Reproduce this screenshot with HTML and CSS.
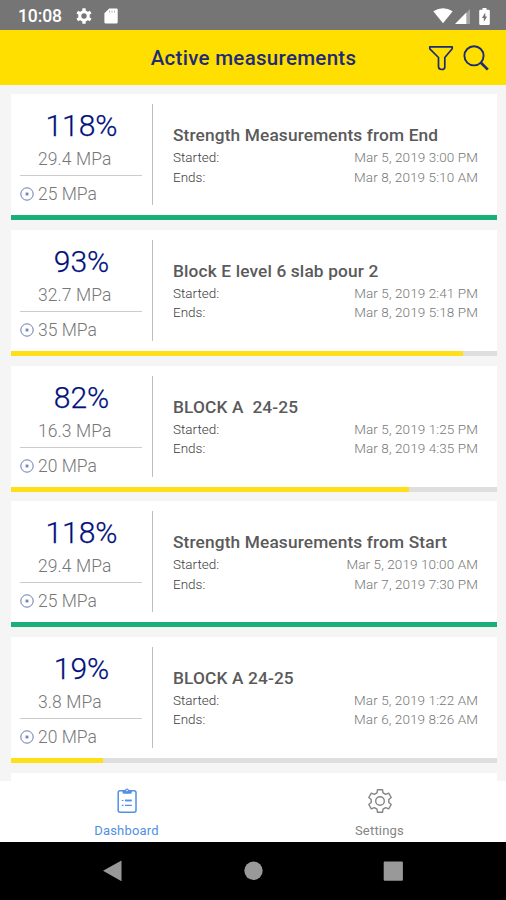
FILE: index.html
```html
<!DOCTYPE html>
<html lang="en">
<head>
<meta charset="utf-8">
<title>Active measurements</title>
<link rel="stylesheet" href="styles.css">
</head>
<body>
<svg width="0" height="0" class="defs" aria-hidden="true">
  <symbol id="target" viewBox="0 0 14 14">
    <circle cx="7" cy="7" r="6.2" fill="none" stroke="currentColor" stroke-width="1"/>
    <circle cx="7" cy="7" r="2" fill="currentColor" opacity=".45"/>
    <circle cx="7" cy="7" r="1.100" fill="currentColor"/>
  </symbol>
</svg>
<div class="phone">
  <div class="status">
    <span class="clock">10:08</span>
    <svg class="s-gear" width="16" height="16" viewBox="0 0 16 16"><g fill="#fff"><circle cx="8" cy="8" r="5.8"/><rect x="6.3" y="0.2" width="3.4" height="15.6" rx=".6"/><rect x="6.3" y="0.2" width="3.4" height="15.6" rx=".6" transform="rotate(60 8 8)"/><rect x="6.3" y="0.2" width="3.4" height="15.6" rx=".6" transform="rotate(120 8 8)"/></g><circle cx="8" cy="8" r="2.7" fill="#757575"/></svg>
    <svg class="s-card" width="14" height="16" viewBox="0 0 14 16"><path fill="#fff" d="M5.2.5H12.500Q13.700.5 13.700 1.800V14Q13.700 15.500 12.300 15.500H1.800Q.4 15.500.4 14V5.300Z"/><path d="M5.500 2.500V4.700M8 2.500V4.700M10.500 2.500V4.700" stroke="#bbb" stroke-width="1"/></svg>
    <span class="grow"></span>
    <svg class="s-wifi" width="20" height="16" viewBox="0 0 20 16"><path fill="#fff" d="M.3 3.200Q10-2.800 19.700 3.200L10 15.200Z"/></svg>
    <svg class="s-signal" width="16" height="15" viewBox="0 0 16 15"><path fill="#a4a4a4" d="M10.500 4.800L15 0V15H10.500Z"/><path fill="#fff" d="M0 15L11.300 3.400V15Z"/></svg>
    <svg class="s-batt" width="11" height="17" viewBox="0 0 11 17"><path fill="#fff" d="M3.500 0H7.500V1.800H9.500Q10.800 1.800 10.800 3V15.500Q10.800 17 9.500 17H1.500Q.2 17 .2 15.500V3Q.2 1.800 1.500 1.800H3.500Z"/><path fill="#757575" d="M6.300 4.500L2.900 10H4.800V14L8.100 8.500H6.300Z"/></svg>
  </div>
  <header class="bar">
    <h1>Active measurements</h1>
    <div class="actions">
      <svg width="26" height="26" viewBox="0 0 26 26"><path fill="none" stroke="#1d2b78" stroke-width="1.700" stroke-linejoin="round" d="M1.800 1.800H24.200V3.800L16.800 12.500V22Q16.800 24.500 13.800 24.500Q10.500 24.500 10.500 21.500V12.500L1.800 3.800Z"/></svg>
      <svg width="26" height="26" viewBox="0 0 26 26"><circle cx="11" cy="10.800" r="9.600" fill="none" stroke="#1d2b78" stroke-width="1.900"/><path d="M17.700 17.500L24.800 24.600" stroke="#1d2b78" stroke-width="2.700"/></svg>
    </div>
  </header>
  <main class="list">
    <article class="card">
      <div class="body">
        <div class="value"><b class="pct">118%</b><span class="mpa">29.4 MPa</span><span class="goal"><svg width="14" height="14"><use href="#target"/></svg>25 MPa</span></div>
        <div class="info"><h2>Strength Measurements from End</h2><p><span>Started:</span><time>Mar 5, 2019 3:00 PM</time></p><p><span>Ends:</span><time>Mar 8, 2019 5:10 AM</time></p></div>
      </div>
      <div class="track"><div class="fill done" style="width:100%"></div></div>
    </article>
    <article class="card">
      <div class="body">
        <div class="value"><b class="pct">93%</b><span class="mpa">32.7 MPa</span><span class="goal"><svg width="14" height="14"><use href="#target"/></svg>35 MPa</span></div>
        <div class="info"><h2>Block E level 6 slab pour 2</h2><p><span>Started:</span><time>Mar 5, 2019 2:41 PM</time></p><p><span>Ends:</span><time>Mar 8, 2019 5:18 PM</time></p></div>
      </div>
      <div class="track"><div class="fill" style="width:93%"></div></div>
    </article>
    <article class="card">
      <div class="body">
        <div class="value"><b class="pct">82%</b><span class="mpa">16.3 MPa</span><span class="goal"><svg width="14" height="14"><use href="#target"/></svg>20 MPa</span></div>
        <div class="info"><h2>BLOCK A&nbsp; 24-25</h2><p><span>Started:</span><time>Mar 5, 2019 1:25 PM</time></p><p><span>Ends:</span><time>Mar 8, 2019 4:35 PM</time></p></div>
      </div>
      <div class="track"><div class="fill" style="width:82%"></div></div>
    </article>
    <article class="card">
      <div class="body">
        <div class="value"><b class="pct">118%</b><span class="mpa">29.4 MPa</span><span class="goal"><svg width="14" height="14"><use href="#target"/></svg>25 MPa</span></div>
        <div class="info"><h2>Strength Measurements from Start</h2><p><span>Started:</span><time>Mar 5, 2019 10:00 AM</time></p><p><span>Ends:</span><time>Mar 7, 2019 7:30 PM</time></p></div>
      </div>
      <div class="track"><div class="fill done" style="width:100%"></div></div>
    </article>
    <article class="card">
      <div class="body">
        <div class="value"><b class="pct">19%</b><span class="mpa">3.8 MPa</span><span class="goal"><svg width="14" height="14"><use href="#target"/></svg>20 MPa</span></div>
        <div class="info"><h2>BLOCK A 24-25</h2><p><span>Started:</span><time>Mar 5, 2019 1:22 AM</time></p><p><span>Ends:</span><time>Mar 6, 2019 8:26 AM</time></p></div>
      </div>
      <div class="track"><div class="fill" style="width:19%"></div></div>
    </article>
    <article class="card"></article>
  </main>
  <nav class="tabs">
    <a class="tab active">
      <svg width="26" height="26" viewBox="0 0 26 26"><rect x="4.200" y="2.800" width="17.800" height="21.400" rx="2" fill="none" stroke="currentColor" stroke-width="1.500"/><path d="M8.500 2.300H11Q11.200.6 13 .6T15 2.300H17.700V4.500Q17.700 5.800 16.400 5.800H9.800Q8.500 5.800 8.500 4.500Z" fill="currentColor"/><circle cx="13" cy="2.500" r=".8" fill="#fff"/><path d="M7.800 12.500H9.500M7.800 17.300H9.500M11 17.300H17.800" stroke="currentColor" stroke-width="1.200"/><path d="M11 12.500H17.800" stroke="currentColor" stroke-width="1.900"/></svg>
      <span>Dashboard</span>
    </a>
    <a class="tab">
      <svg width="26" height="26" viewBox="0 0 26 26"><g fill="none" stroke="currentColor" stroke-width="1.400" stroke-linejoin="round"><path d="M10.500 1.700H15.500L16 4.800L18.700 6.400L21.700 5.200L24.200 9.500L21.800 11.500V14.500L24.200 16.500L21.700 20.800L18.700 19.600L16 21.200L15.500 24.300H10.500L10 21.200L7.300 19.600L4.300 20.800L1.800 16.500L4.200 14.500V11.500L1.800 9.500L4.300 5.200L7.300 6.400L10 4.800Z"/><circle cx="13" cy="13" r="4.300"/></g></svg>
      <span>Settings</span>
    </a>
  </nav>
  <footer class="system">
    <svg width="506" height="58" viewBox="0 0 506 58"><g fill="#999"><path d="M103 28.800L121.500 18.500V39.200Z"/><circle cx="253.500" cy="28.800" r="9.200"/><rect x="383.700" y="19.500" width="19.200" height="19.200" rx="1"/></g></svg>
  </footer>
</div>
</body>
</html>
```

FILE: styles.css
```css
* { box-sizing: border-box; }
body { margin: 0; font-family: Roboto, "Liberation Sans", sans-serif; background: #f5f5f5; }
h1, h2, p { margin: 0; }
svg { display: block; flex: none; }
.defs { position: absolute; }
.phone { width: 506px; height: 900px; display: flex; flex-direction: column; overflow: hidden; }
.status { flex: none; height: 30px; background: #757575; display: flex; align-items: center; padding: 2px 16px 0 18px; color: #fff; }
.clock { font-size: 17.5px; font-weight: 500; width: 58px; letter-spacing: -.1px; }
.s-card { margin-left: 12px; }
.grow { flex: 1; }
.s-wifi { margin-right: 2px; }
.s-signal { margin-right: 8px; }
.bar { flex: none; height: 55px; background: #ffdf00; display: grid; grid-template-columns: 1fr auto 1fr; align-items: center; padding: 0 17px; }
.bar h1 { grid-column: 2; font-size: 20.500px; font-weight: 500; color: #1d2b78; white-space: nowrap; letter-spacing: .3px; margin-left: 1px; }
.actions { display: flex; gap: 9px; justify-content: flex-end; }
.list { flex: 1; min-height: 0; overflow: hidden; padding: 9.300px 9px 0 10.500px; display: flex; flex-direction: column; gap: 9.700px; background: #f5f5f5; }
.card { flex: none; height: 126px; background: #fff; display: flex; flex-direction: column; }
.body { flex: 1; min-height: 0; display: flex; padding: 10px 0; }
.value { width: 142.500px; padding: 0 10px 0 9.500px; border-right: 1px solid #bdbdbd; display: flex; flex-direction: column; color: #777; font-size: 17.500px; font-weight: 300; }
.pct { flex: none; font-size: 30px; line-height: 43px; height: 42px; font-weight: 300; color: #00107c; text-align: center; padding-left: 1px; -webkit-text-stroke: .25px #00107c; }
.mpa { flex: none; height: 30px; line-height: 26px; padding-left: 18px; border-bottom: 1.500px solid #ccc; letter-spacing: .08px; }
.goal { display: flex; align-items: center; gap: 4px; height: 29px; padding-top: 7px; }
.goal svg { color: #6878b0; }
.info { flex: 1; padding: 19px 19px 0 20px; }
.info h2 { font-size: 17.300px; line-height: 24px; font-weight: 500; color: #5a5a5a; white-space: nowrap; letter-spacing: .14px; }
.info p { display: flex; justify-content: space-between; font-size: 13.500px; line-height: 19.300px; color: #3c3c3c; font-weight: 300; }
.info h2 + p { margin-top: 1px; }
.info time { color: #777; letter-spacing: .1px; }
.track { flex: none; height: 5px; background: #dedede; }
.fill { height: 100%; background: #ffdf18; }
.done { background: #18b078; }
.tabs { flex: none; height: 61px; background: #fff; display: flex; }
.tab { flex: 1; display: flex; flex-direction: column; align-items: center; padding-top: 7px; color: #858585; font-size: 13px; line-height: 18px; gap: 8px; letter-spacing: .2px; }
.active { color: #5290e2; }
.system { flex: none; height: 58px; background: #000; }
```
